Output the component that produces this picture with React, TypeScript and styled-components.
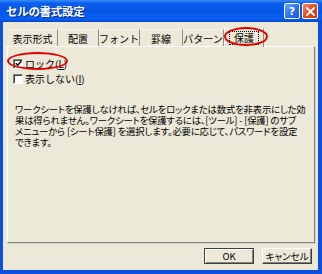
import React from "react";
import styled, { createGlobalStyle } from "styled-components";

const FONT = `"Noto Sans CJK JP", "Noto Sans", sans-serif`;

const Global = createGlobalStyle`
  html, body { margin: 0; padding: 0; background: #ffffff; }
  body { font-family: ${FONT}; }
`;

const Window = styled.div`
  position: relative;
  width: 322px;
  height: 274px;
  display: flex;
  flex-direction: column;
  background: #0b4fdf;
  font-family: ${FONT};
  color: #000;
  overflow: hidden;
`;

const TitleBar = styled.div`
  height: 22px;
  flex: none;
  display: flex;
  align-items: center;
  padding: 0 4px 0 6px;
  background: linear-gradient(
    to bottom,
    #3b8cf7 0%,
    #0a5fee 14%,
    #0656e4 50%,
    #0a60f2 86%,
    #0546cc 100%
  );
`;

const Title = styled.span`
  color: #fff;
  font-size: 11.5px;
  font-weight: 700;
  text-shadow: 1px 1px 0 #0b2a8f;
  letter-spacing: -0.3px;
`;

const TitleButtons = styled.div`
  margin-left: auto;
  display: flex;
  gap: 2px;
`;

const TitleButton = styled.div<{ $kind: "help" | "close" }>`
  width: 14px;
  height: 14px;
  border: 1px solid #fff;
  border-radius: 2px;
  display: flex;
  align-items: center;
  justify-content: center;
  background: ${(p) =>
    p.$kind === "close"
      ? "linear-gradient(135deg, #f08a6a 0%, #e0451f 55%, #c8381a 100%)"
      : "linear-gradient(135deg, #6aa8ff 0%, #2a6ff0 55%, #1c58d8 100%)"};
  color: #fff;
  font-family: "DejaVu Sans", sans-serif;
  font-size: 11px;
  font-weight: 700;
  line-height: 1;
`;

const Frame = styled.div`
  flex: 1;
  display: flex;
  padding: 0 4px 4px 3px;
`;

const Body = styled.div`
  flex: 1;
  display: flex;
  flex-direction: column;
  background: #ece9d8;
  padding: 5px 3px 0 4px;
`;

const TabRow = styled.div`
  height: 19px;
  display: flex;
  align-items: flex-end;
  padding-left: 1px;
`;

const Tab = styled.div<{ $w: number; $active?: boolean }>`
  box-sizing: border-box;
  width: ${(p) => p.$w}px;
  height: ${(p) => (p.$active ? 19 : 17)}px;
  margin-bottom: ${(p) => (p.$active ? -1 : 0)}px;
  position: relative;
  z-index: ${(p) => (p.$active ? 2 : 1)};
  display: flex;
  align-items: center;
  justify-content: center;
  font-size: 10px;
  background: #ece9d8;
  border-top: 1px solid ${(p) => (p.$active ? "#ffffff" : "#f6f4ec")};
  border-right: 1px solid #8d8d8d;
  border-left: ${(p) => (p.$active ? "1px solid #ffffff" : "none")};
  white-space: nowrap;
`;

const Focus = styled.span`
  outline: 1px dotted #000;
  outline-offset: 1px;
  padding: 0 3px;
  line-height: 10px;
`;

const Panel = styled.div`
  height: 197px;
  box-sizing: border-box;
  border-top: 1px solid #ffffff;
  border-left: 1px solid #ffffff;
  border-right: 1px solid #808080;
  border-bottom: 1px solid #808080;
  box-shadow: 1px 1px 0 #d5d2c6;
  padding: 9px 0 0 5px;
  display: flex;
  flex-direction: column;
`;

const CheckRow = styled.div`
  height: 15px;
  display: flex;
  align-items: center;
  gap: 2px;
  font-size: 10px;
  white-space: nowrap;
`;

const Box = styled.div`
  width: 8px;
  height: 8px;
  flex: none;
  background: #fff;
  border-style: solid;
  border-width: 1px;
  border-color: #808080 #ffffff #ffffff #808080;
  box-shadow: inset 1px 1px 0 #404040;
  display: flex;
  align-items: center;
  justify-content: center;
`;

const U = styled.span`
  text-decoration: underline;
`;

const Paragraph = styled.div`
  margin: 18px 0 0 2px;
  display: flex;
  flex-direction: column;
  font-size: 9.4px;
  font-feature-settings: "palt";
  letter-spacing: -0.2px;
`;

const Line = styled.div`
  height: 11px;
  line-height: 11px;
  white-space: nowrap;
`;

const Footer = styled.div`
  display: flex;
  justify-content: flex-end;
  gap: 8px;
  padding: 5px 3px 0 0;
`;

const Button = styled.div<{ $default?: boolean }>`
  box-sizing: border-box;
  width: 50px;
  height: 16px;
  display: flex;
  align-items: center;
  justify-content: center;
  font-size: 9.5px;
  font-feature-settings: "palt";
  white-space: nowrap;
  background: #ece9d8;
  border-style: solid;
  border-width: 1px;
  border-color: ${(p) =>
    p.$default ? "#404040" : "#ffffff #404040 #404040 #ffffff"};
  box-shadow: ${(p) =>
    p.$default
      ? "inset 1px 1px 0 #ffffff, inset -1px -1px 0 #808080"
      : "inset -1px -1px 0 #808080"};
`;

const Ellipse = styled.div<{ $x: number; $y: number; $w: number; $h: number }>`
  position: absolute;
  z-index: 10;
  left: ${(p) => p.$x}px;
  top: ${(p) => p.$y}px;
  width: ${(p) => p.$w}px;
  height: ${(p) => p.$h}px;
  box-sizing: border-box;
  border: 2.5px solid #e30000;
  border-radius: 50%;
  pointer-events: none;
`;

const tabs = [
  { label: "表示形式", w: 50 },
  { label: "配置", w: 41 },
  { label: "フォント", w: 41 },
  { label: "罫線", w: 43 },
  { label: "パターン", w: 41 },
];

const lines = [
  "ワークシートを保護しなければ、セルをロックまたは数式を非表示にした効",
  "果は得られません。ワークシートを保護するには、[ツール] - [保護] のサブ",
  "メニューから [シート保護] を選択します。必要に応じて、パスワードを設定",
  "できます。",
];

export default function App() {
  return (
    <>
      <Global />
      <Window>
        <TitleBar>
          <Title>セルの書式設定</Title>
          <TitleButtons>
            <TitleButton $kind="help">?</TitleButton>
            <TitleButton $kind="close">
              <svg width="9" height="9" viewBox="0 0 9 9">
                <path d="M1 1L8 8M8 1L1 8" stroke="#fff" strokeWidth="1.8" strokeLinecap="square" />
              </svg>
            </TitleButton>
          </TitleButtons>
        </TitleBar>
        <Frame>
          <Body>
            <TabRow>
              {tabs.map((t) => (
                <Tab key={t.label} $w={t.w}>
                  {t.label}
                </Tab>
              ))}
              <Tab $w={40} $active>
                <Focus>保護</Focus>
              </Tab>
            </TabRow>
            <Panel>
              <CheckRow>
                <Box>
                  <svg width="7" height="7" viewBox="0 0 7 7">
                    <path d="M0.8 3.3L2.7 5.3L6.3 1.2" stroke="#000" strokeWidth="1.4" fill="none" />
                  </svg>
                </Box>
                <span>
                  ロック(<U>L</U>)
                </span>
              </CheckRow>
              <CheckRow>
                <Box />
                <span>
                  表示しない(<U>I</U>)
                </span>
              </CheckRow>
              <Paragraph>
                {lines.map((l) => (
                  <Line key={l}>{l}</Line>
                ))}
              </Paragraph>
            </Panel>
            <Footer>
              <Button $default>OK</Button>
              <Button>キャンセル</Button>
            </Footer>
          </Body>
        </Frame>
        <Ellipse $x={7} $y={52} $w={61} $h={18} />
        <Ellipse $x={224} $y={27} $w={44} $h={19} />
      </Window>
    </>
  );
}
